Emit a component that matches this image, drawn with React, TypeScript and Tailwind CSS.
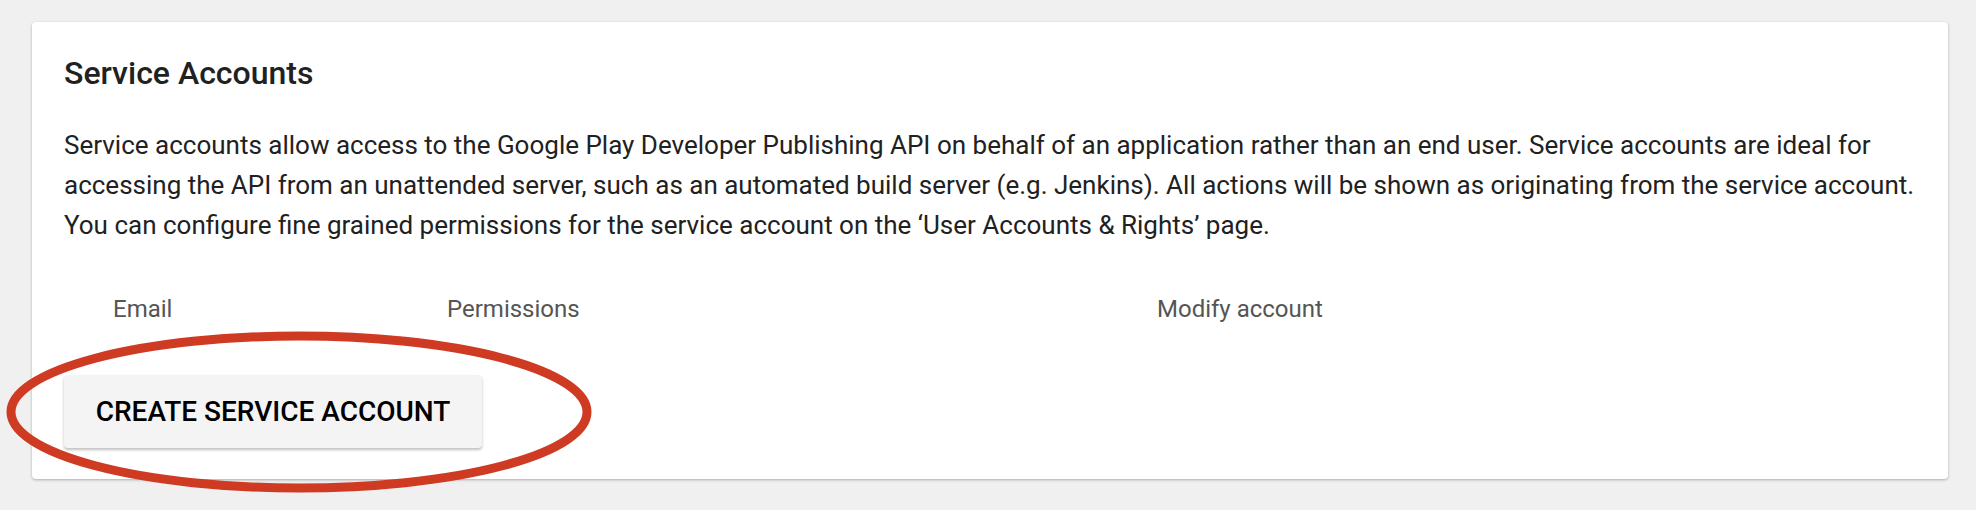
import React from "react";

const columns = ["Email", "Permissions", "Modify account"];

export default function App() {
  return (
    <div
      className="min-h-[510px] w-full bg-[#f0f0f0] pt-[22px] pl-[32px] pr-[28px]"
      style={{ fontFamily: "Roboto, 'Liberation Sans', sans-serif" }}
    >
      <div className="relative w-[1916px] rounded-[4px] bg-white px-[32px] pt-[31px] pb-[31px] shadow-[0_1px_3px_rgba(0,0,0,0.28)]">
        <h2 className="text-[32px] leading-[40px] font-medium text-[#212121]">Service Accounts</h2>

        <p className="mt-[32px] text-[26px] leading-[40px] text-[#212121]">
          Service accounts allow access to the Google Play Developer Publishing API on behalf of an application
          rather than an end user. Service accounts are ideal for accessing the API from an unattended server,
          such as an automated build server (e.g. Jenkins). All actions will be shown as originating from the
          service account. You can configure fine grained permissions for the service account on the ‘User
          Accounts &amp; Rights’ page.
        </p>

        {/* table header, no rows yet */}
        <div className="mt-[48px] grid grid-cols-[334px_710px_1fr] pl-[49px] text-[24px] leading-[32px] text-[#555555]">
          {columns.map((c) => (
            <div key={c}>{c}</div>
          ))}
        </div>

        <button className="mt-[50px] flex h-[73px] w-[418px] items-center justify-center rounded-[4px] bg-[#f4f4f4] text-[28px] font-medium text-black shadow-[0_2px_3px_rgba(0,0,0,0.25)]">
          CREATE SERVICE ACCOUNT
        </button>

        {/* red annotation ring */}
        <svg
          className="pointer-events-none absolute left-[-32px] top-[300px]"
          width="620"
          height="184"
          viewBox="0 0 620 184"
        >
          <ellipse cx="299" cy="90" rx="288" ry="76" fill="none" stroke="#cf3a23" strokeWidth="9" />
        </svg>
      </div>
    </div>
  );
}
